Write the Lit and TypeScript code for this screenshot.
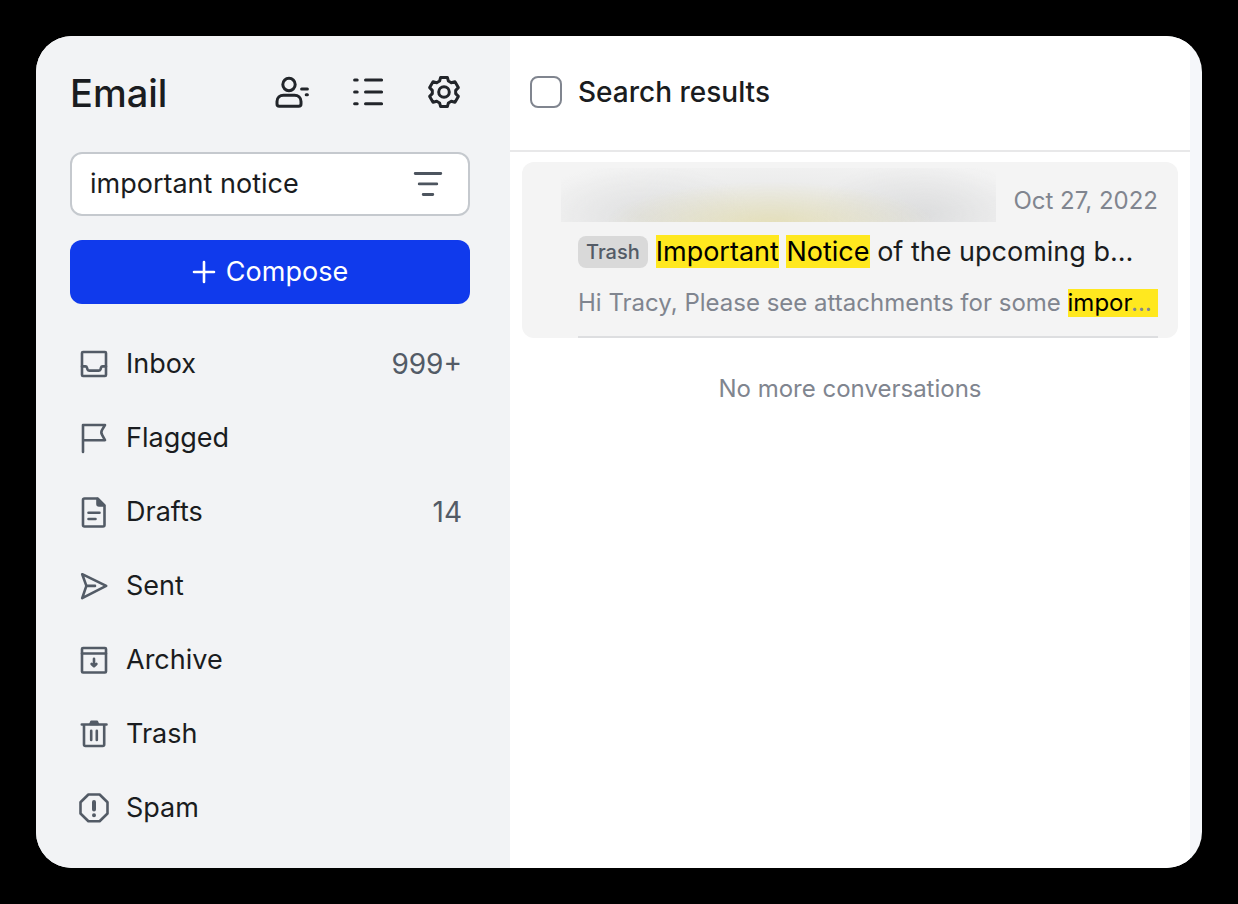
import { LitElement, html, css, svg } from "lit";
import { customElement, state } from "lit/decorators.js";

interface Folder {
  name: string;
  count: string;
  icon: unknown;
}

const folders: Folder[] = [
  {
    name: "Inbox",
    count: "999+",
    icon: svg`<rect x="4" y="4" width="24" height="24" rx="1"/><path d="M4 18.4h3.4c1 0 1.4.5 1.6 1.3l.4 1.5c.2.9.8 1.4 1.7 1.4h9.8c.9 0 1.5-.5 1.7-1.4l.4-1.5c.2-.8.6-1.3 1.600-1.300H28"/>`,
  },
  {
    name: "Flagged",
    count: "",
    icon: svg`<path d="M5 30V3h22l-2.900 4.800c-1.100 1.800-1.100 3.200 0 5L27 18.200H5"/>`,
  },
  {
    name: "Drafts",
    count: "14",
    icon: svg`<path d="M6.500 2.500H19.500L26.500 9.500V29Q26.500 30.500 25 30.500H6.500Q5 30.500 5 29V4Q5 2.500 6.500 2.500Z"/><path class="solid" d="M19.500 3V8Q19.500 9.500 21 9.500H26Z"/><path d="M10.500 16.800H21.500M10.500 23H17.500"/>`,
  },
  {
    name: "Sent",
    count: "",
    icon: svg`<path d="M4.200 4.200L28.200 15.900 4.200 28.200 8.400 15.900ZM8.400 15.900H17"/>`,
  },
  {
    name: "Archive",
    count: "",
    icon: svg`<rect x="4" y="4" width="24" height="24.500" rx="1"/><path d="M4 9.500H28M16 14.800V21.800M13.600 20L16 22.200 18.400 20"/>`,
  },
  {
    name: "Trash",
    count: "",
    icon: svg`<path d="M3.800 6.500H28.500M6 6.500V26.500Q6 28 7.500 28H24.700Q26.200 28 26.200 26.500V6.500M13.200 12.800V22M18.800 12.800V22"/><path class="solid" d="M12.500 6L13.300 3.900H19L19.800 6Z"/>`,
  },
  {
    name: "Spam",
    count: "",
    icon: svg`<path d="M10.400 2.500H21.600L29.500 10.300V21.500L21.600 29.300H10.400L2.500 21.500V10.300Z"/><path class="thick" d="M16 10V17.500M16 23.200V23.300"/>`,
  },
];

/** Outline of a six-toothed cog centred on (cx, cy). */
function cogPath(cx: number, cy: number): string {
  const points: string[] = [];
  for (let tooth = 0; tooth < 6; tooth++) {
    const mid = -90 + tooth * 60;
    for (const [offset, radius] of [
      [-22, 11.8],
      [-13, 15],
      [13, 15],
      [22, 11.8],
    ]) {
      const angle = ((mid + offset) * Math.PI) / 180;
      points.push(
        `${(cx + radius * Math.cos(angle)).toFixed(2)} ${(cy + radius * Math.sin(angle)).toFixed(2)}`,
      );
    }
  }
  return `M${points.join("L")}Z`;
}

@customElement("mail-sidebar")
export class MailSidebar extends LitElement {
  @state() private query = "important notice";

  static styles = css`
    :host {
      display: block;
      box-sizing: border-box;
      background: #f2f3f5;
      padding: 16px 40px 16px 34px;
    }
    * {
      box-sizing: border-box;
    }
    button {
      border: 0;
      padding: 0;
      background: none;
      color: inherit;
      font: inherit;
      cursor: pointer;
    }
    svg {
      display: block;
      flex: none;
      fill: none;
      stroke: currentColor;
      stroke-linecap: round;
      stroke-linejoin: round;
    }
    .solid {
      fill: currentColor;
    }
    .thick {
      stroke-width: 4px;
    }
    .top {
      display: flex;
      align-items: center;
      justify-content: space-between;
      height: 80px;
      margin-bottom: 20px;
    }
    h1 {
      margin: 0;
      padding-top: 2px;
      font-size: 38px;
      line-height: 48px;
      font-weight: 500;
    }
    .tools {
      display: flex;
      gap: 36px;
      padding-right: 6px;
      color: #22252a;
    }
    .tools svg {
      stroke-width: 3px;
    }
    .search {
      display: flex;
      align-items: center;
      height: 64px;
      margin-bottom: 24px;
      padding: 0 24px 0 18px;
      border: 2px solid #c5c9ce;
      border-radius: 12px;
      background: #fff;
    }
    .search input {
      flex: 1;
      min-width: 0;
      border: 0;
      padding: 0;
      outline: 0;
      background: none;
      color: inherit;
      font: inherit;
    }
    .search button {
      color: #4d555f;
    }
    .search svg {
      stroke-width: 2.8px;
    }
    .compose {
      display: flex;
      align-items: center;
      justify-content: center;
      gap: 10px;
      width: 100%;
      height: 64px;
      border-radius: 12px;
      background: #103aec;
      color: #fff;
    }
    .compose svg {
      stroke-width: 2.6px;
    }
    nav {
      display: flex;
      flex-direction: column;
      gap: 10px;
      margin-top: 28px;
    }
    .folder {
      display: flex;
      align-items: center;
      gap: 16px;
      height: 64px;
      padding: 0 8px;
      color: inherit;
      text-decoration: none;
    }
    .folder svg {
      color: #535b66;
      stroke-width: 2.6px;
    }
    .name {
      flex: 1;
    }
    .count {
      color: #535b66;
      font-size: 28px;
    }
  `;

  render() {
    return html`
      <header class="top">
        <h1>Email</h1>
        <div class="tools">
          <button aria-label="Contacts">
            <svg width="40" height="40" viewBox="0 0 40 40">
              <circle cx="17" cy="12.500" r="6.200" />
              <path
                d="M5 32V29.500C5 25.500 8 23.300 11.500 23.300H22.500C26 23.300 29 25.500 29 29.500V32Q29 34.300 26.700 34.300H7.300Q5 34.300 5 32ZM29.600 17H35.400M34.200 22.700H35.400"
              />
            </svg>
          </button>
          <button aria-label="Lists">
            <svg width="40" height="40" viewBox="0 0 40 40">
              <path d="M6.600 8H9.200M17.500 8H33.600M6.600 20H9.200M17.500 20H33.600M6.600 31.800H9.200M17.500 31.800H33.600" />
            </svg>
          </button>
          <button aria-label="Settings">
            <svg width="40" height="40" viewBox="0 0 40 40">
              <path d=${cogPath(20, 20)} />
              <circle cx="20" cy="20" r="5.300" />
            </svg>
          </button>
        </div>
      </header>
      <form class="search" role="search" @submit=${(e: Event) => e.preventDefault()}>
        <input
          type="text"
          aria-label="Search mail"
          .value=${this.query}
          @input=${(e: Event) => (this.query = (e.target as HTMLInputElement).value)}
        />
        <button type="button" aria-label="Filter">
          <svg width="32" height="32" viewBox="0 0 32 32">
            <path d="M3.200 5.500H28.800M7.200 15.900H24.800M11.200 26.500H20.800" />
          </svg>
        </button>
      </form>
      <button class="compose">
        <svg width="24" height="24" viewBox="0 0 24 24">
          <path d="M12 2V22M2 12H22" />
        </svg>
        Compose
      </button>
      <nav aria-label="Folders">
        ${folders.map(
          (f) => html`
            <a class="folder" href="#${f.name.toLowerCase()}">
              <svg width="32" height="32" viewBox="0 0 32 32">${f.icon}</svg>
              <span class="name">${f.name}</span>
              <span class="count">${f.count}</span>
            </a>
          `,
        )}
      </nav>
    `;
  }
}

@customElement("mail-results")
export class MailResults extends LitElement {
  static styles = css`
    :host {
      display: block;
      background: #fff;
      min-width: 0;
    }
    * {
      box-sizing: border-box;
    }
    .head {
      display: flex;
      align-items: center;
      gap: 16px;
      height: 116px;
      padding: 0 20px 2px;
      border-bottom: 2px solid #e8e8e9;
      font-size: 28px;
      font-weight: 500;
    }
    .head input {
      appearance: none;
      width: 32px;
      height: 32px;
      margin: 0;
      border: 2px solid #80858f;
      border-radius: 8px;
      background: #fff;
    }
    .head input:checked {
      background: #103aec;
    }
    h2 {
      margin: 0;
      font: inherit;
    }
    .list {
      padding: 10px 12px;
    }
    .item {
      padding: 6px 20px 0 56px;
      border-radius: 12px;
      background: #f4f4f4;
    }
    .line {
      display: flex;
      gap: 17px;
      margin-left: -17px;
    }
    .sender {
      flex: 1;
      height: 54px;
      background:
        radial-gradient(ellipse 38% 80% at 48% 105%, rgba(228, 218, 150, 0.55), transparent),
        radial-gradient(ellipse 26% 100% at 84% 85%, rgba(205, 206, 208, 0.5), transparent),
        radial-gradient(ellipse 26% 100% at 18% 90%, rgba(205, 206, 208, 0.4), transparent),
        radial-gradient(ellipse 60% 120% at 50% 90%, rgba(212, 213, 212, 0.5), transparent);
    }
    time {
      padding-top: 12px;
      font-size: 24px;
      line-height: 42px;
      color: #80858f;
    }
    .subject {
      display: flex;
      align-items: center;
      gap: 8px;
      height: 60px;
      white-space: nowrap;
    }
    .tag {
      height: 32px;
      padding: 0 8px;
      border-radius: 8px;
      background: #d9d9d9;
      color: #535b66;
      font-size: 20px;
      line-height: 32px;
      font-weight: 500;
    }
    mark {
      background: #ffe81f;
      color: #000;
    }
    .body {
      padding-bottom: 12px;
      border-bottom: 2px solid #dddee0;
    }
    .preview {
      display: flex;
      align-items: center;
      margin: 0;
      overflow: hidden;
      white-space: pre;
      font-size: 24px;
      line-height: 42px;
      color: #80858f;
    }
    .preview mark {
      flex: 1;
      line-height: 28px;
    }
    .more {
      color: #80858f;
    }
    .end {
      margin: 0;
      padding-top: 30px;
      text-align: center;
      font-size: 24px;
      line-height: 42px;
      color: #80858f;
    }
  `;

  render() {
    return html`
      <header class="head">
        <input type="checkbox" id="all" />
        <label for="all"><h2>Search results</h2></label>
      </header>
      <div class="list">
        <article class="item">
          <div class="line">
            <div class="sender"></div>
            <time datetime="2022-10-27">Oct 27, 2022</time>
          </div>
          <div class="subject">
            <span class="tag">Trash</span>
            <span><mark>Important</mark> <mark>Notice</mark> of the upcoming b…</span>
          </div>
          <div class="body">
            <p class="preview"><span>Hi Tracy, Please see attachments for some </span><mark>impor<span class="more">…</span></mark></p>
          </div>
        </article>
        <p class="end">No more conversations</p>
      </div>
    `;
  }
}

@customElement("app-root")
export class AppRoot extends LitElement {
  static styles = css`
    :host {
      display: flex;
      box-sizing: border-box;
      min-height: 100vh;
      padding: 36px;
      background: #000;
      color: #1a1c20;
      font-family: Inter, "Liberation Sans", sans-serif;
      font-size: 27px;
      line-height: 40px;
    }
    .window {
      flex: 1;
      min-width: 0;
      display: grid;
      grid-template-columns: 474px minmax(0, 1fr);
      padding-right: 12px;
      border-radius: 36px;
      overflow: hidden;
      background: #f5f7fa;
    }
  `;

  render() {
    return html`
      <main class="window">
        <mail-sidebar></mail-sidebar>
        <mail-results></mail-results>
      </main>
    `;
  }
}
